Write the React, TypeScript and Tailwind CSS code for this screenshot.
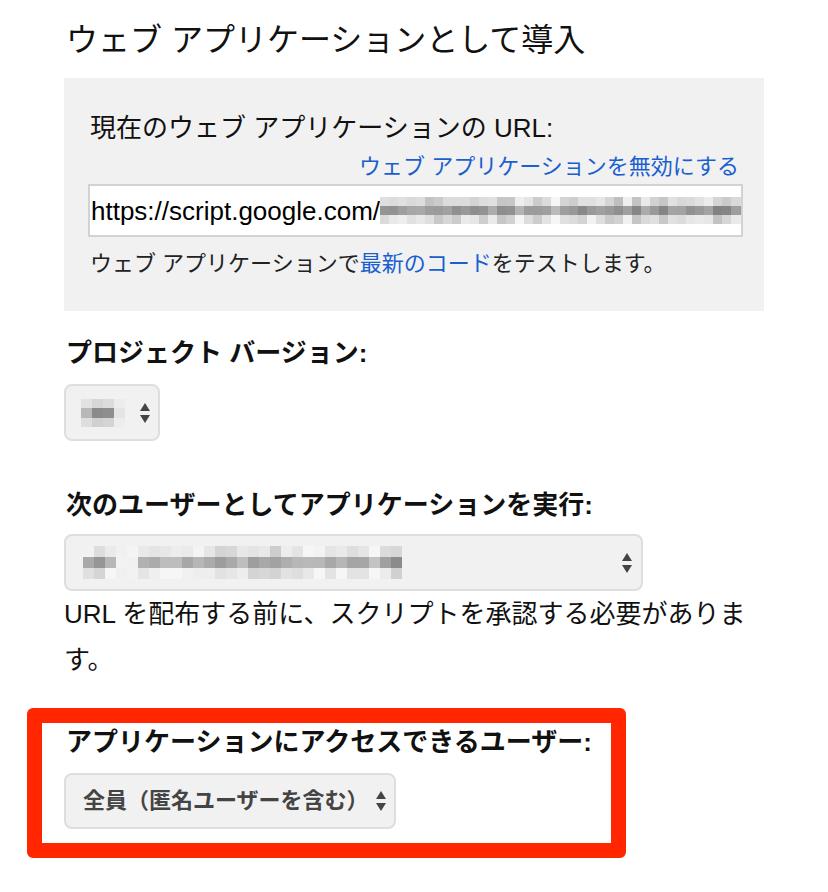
import React from "react";

const FONT = '"Liberation Sans", "Noto Sans CJK JP", sans-serif';

function rand(seed: number) {
  let s = seed;
  return () => {
    s = (s * 9301 + 49297) % 233280;
    return s / 233280;
  };
}

function Mosaic({
  width,
  height,
  cell,
  seed,
  rowsDark,
  amp = 50,
  gaps = [],
}: {
  width: number;
  height: number;
  cell: number;
  seed: number;
  rowsDark: number[];
  amp?: number;
  gaps?: number[];
}) {
  const r = rand(seed);
  const cols = Math.ceil(width / cell);
  const rows = Math.ceil(height / cell);
  const rects: React.ReactElement[] = [];
  for (let x = 0; x < cols; x++) {
    const colShift = (r() - 0.5) * amp;
    for (let y = 0; y < rows; y++) {
      const base = rowsDark[y] ?? 235;
      let v = Math.round(base + colShift + (r() - 0.5) * amp * 0.6);
      if (gaps.includes(x)) v = 238 + Math.round(r() * 8);
      v = Math.max(100, Math.min(246, v));
      rects.push(
        <rect
          key={`${x}-${y}`}
          x={x * cell}
          y={y * cell}
          width={cell}
          height={cell}
          fill={`rgb(${v},${v},${v})`}
        />
      );
    }
  }
  return (
    <svg width={width} height={height} className="block shrink-0">
      {rects}
    </svg>
  );
}

function Arrows() {
  return (
    <svg width="12" height="22" viewBox="0 0 12 22" className="block shrink-0">
      <path d="M6 1 L11 9 L1 9 Z" fill="#444" />
      <path d="M6 21 L11 13 L1 13 Z" fill="#444" />
    </svg>
  );
}

export default function App() {
  return (
    <div
      className="w-[828px] h-[892px] bg-white text-black overflow-hidden"
      style={{ fontFamily: FONT }}
    >
      <div className="ml-[64px] w-[700px]">
        <h1 className="pt-[20px] pl-[2px] text-[32px] leading-[40px] font-normal text-[#111]">
          ウェブ アプリケーションとして導入
        </h1>

        <div className="mt-[18px] h-[233px] bg-[#f1f1f1] pl-[24px] pr-[21px] pt-[34px]">
          <div className="pl-[2px] text-[26px] leading-[32px] text-[#111]">
            現在のウェブ アプリケーションの URL:
          </div>
          <div className="mt-[8px] pr-[4px] text-right text-[22px] leading-[30px] text-[#1a5fd0]">
            ウェブ アプリケーションを無効にする
          </div>
          <div className="mt-[2px] flex h-[53px] w-[655px] items-center overflow-hidden border-2 border-[#d2d2d2] bg-white pl-[1px]">
            <span className="whitespace-nowrap text-[26px] leading-[30px] text-black">
              https://script.google.com/
            </span>
            <Mosaic width={370} height={27} cell={9} seed={7} rowsDark={[222, 160, 225]} amp={45} />
          </div>
          <div className="mt-[12px] pl-[2px] text-[22px] leading-[30px] text-[#222]">
            ウェブ アプリケーションで
            <span className="text-[#1a5fd0]">最新のコード</span>
            をテストします。
          </div>
        </div>

        <div className="mt-[26px] pl-[2px] text-[26px] leading-[32px] font-bold text-[#111]">
          プロジェクト バージョン:
        </div>
        <div className="mt-[15px] flex h-[57px] w-[96px] items-center rounded-[8px] border-2 border-[#dedede] bg-[#f1f1f1] pl-[15px]">
          <svg width="46" height="30" className="block shrink-0">
            <rect x="0" y="0" width="46" height="30" fill="#f1f1f1" />
            <rect x="0" y="1" width="11" height="9" fill="#e2e2e2" />
            <rect x="11" y="1" width="11" height="9" fill="#d6d6d6" />
            <rect x="22" y="1" width="11" height="9" fill="#dcdcdc" />
            <rect x="33" y="1" width="11" height="9" fill="#ececec" />
            <rect x="0" y="10" width="11" height="10" fill="#b8b8b8" />
            <rect x="11" y="10" width="11" height="10" fill="#8a8a8a" />
            <rect x="22" y="10" width="11" height="10" fill="#8e8e8e" />
            <rect x="33" y="10" width="11" height="10" fill="#e4e4e4" />
            <rect x="0" y="20" width="11" height="9" fill="#dedede" />
            <rect x="11" y="20" width="11" height="9" fill="#d0d0d0" />
            <rect x="22" y="20" width="11" height="9" fill="#d4d4d4" />
            <rect x="33" y="20" width="11" height="9" fill="#ededed" />
          </svg>
          <div className="ml-[12px]">
            <Arrows />
          </div>
        </div>

        <div className="mt-[48px] pl-[2px] text-[26px] leading-[32px] font-bold text-[#111]">
          次のユーザーとしてアプリケーションを実行:
        </div>
        <div className="mt-[13px] flex h-[57px] w-[579px] items-center justify-between rounded-[8px] border-2 border-[#dedede] bg-[#f1f1f1] pl-[17px] pr-[8px]">
          <Mosaic
            width={319}
            height={33}
            cell={11}
            seed={11}
            rowsDark={[226, 168, 228]}
            amp={40}
            gaps={[3, 4]}
          />
          <Arrows />
        </div>

        <p className="text-[26px] leading-[46px] text-[#111]">
          URL を配布する前に、スクリプトを承認する必要があります。
        </p>

        <div className="ml-[-37px] mt-[25px] w-[599px] rounded-[6px] border-[15px] border-[#ff2600] bg-white pl-[22px] pt-[3px] pb-[14px]">
          <div className="pl-[2px] text-[26px] leading-[32px] font-bold text-[#111]">
            アプリケーションにアクセスできるユーザー:
          </div>
          <div className="mt-[15px] flex h-[56px] w-[332px] items-center rounded-[8px] border-2 border-[#dedede] bg-[#f1f1f1] pl-[17px]">
            <span className="whitespace-nowrap text-[22px] leading-[30px] font-bold text-[#444]">
              全員（匿名ユーザーを含む）
            </span>
            <div className="ml-[6px]">
              <Arrows />
            </div>
          </div>
        </div>
      </div>
    </div>
  );
}
